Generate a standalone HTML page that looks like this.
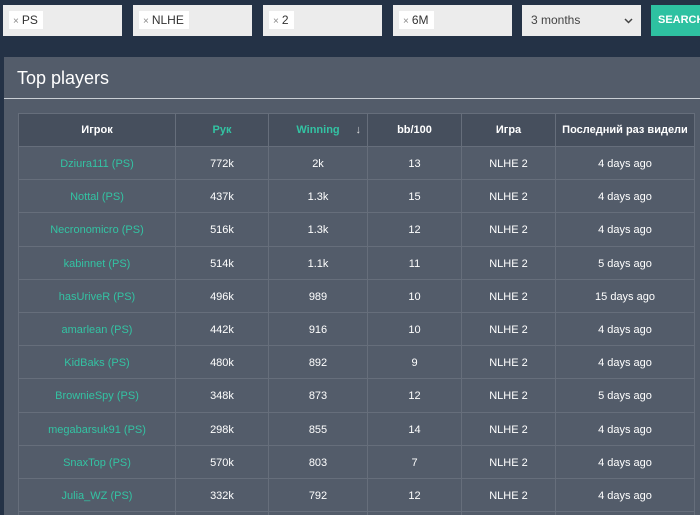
<!DOCTYPE html>
<html style="height:515px;overflow:hidden"><head><meta charset="utf-8"><style>
body{margin:0;width:700px;height:515px;overflow:hidden;background:#243246;font-family:"Liberation Sans",sans-serif;position:relative}
.in{position:absolute;top:5px;height:31px;width:119px;background:#ececec;}
.tag{position:absolute;left:6px;top:6px;height:18px;background:#fff;font-size:12px;line-height:18px;padding:0 5px 0 4px;color:#333}
.tag span{color:#888;font-size:10px;margin-right:3px}
.sel{position:absolute;top:5px;left:522px;width:119px;height:31px;background:#ececec;font-size:12px;line-height:31px;color:#444;}
.btn{position:absolute;top:5px;left:651px;width:60px;height:31px;background:#2ec1a1;color:#fff;font-weight:bold;font-size:11px;line-height:31px;padding-left:7px}
.panel{position:absolute;left:4px;top:57px;width:696px;height:458px;overflow:hidden;background:#535c6a}
.title{position:absolute;left:13px;top:11px;color:#fff;font-size:18px}
.line{position:absolute;left:0;top:41px;width:700px;height:1px;background:#c9ced4}
table{position:absolute;left:14px;top:56px;border-collapse:collapse;font-size:11px;color:#fff}
td,th{border:1px solid #666e7b;height:32px;text-align:center;padding:0}
td{padding-top:2px;height:30.2px}
th{background:#464f5d;font-weight:bold}
td:first-child{color:#33c3a3}
.g{color:#33c3a3}
</style></head><body>
<div class="in" style="left:3px"><div class="tag"><span>×</span>PS</div></div>
<div class="in" style="left:133px"><div class="tag"><span>×</span>NLHE</div></div>
<div class="in" style="left:263px"><div class="tag"><span>×</span>2</div></div>
<div class="in" style="left:393px"><div class="tag"><span>×</span>6M</div></div>
<div class="sel"><span style="margin-left:9px">3 months</span><svg style="position:absolute;left:102px;top:13px" width="9" height="6"><path d="M1 1L4.5 4.5L8 1" stroke="#444" stroke-width="1.5" fill="none"/></svg></div>
<div class="btn">SEARCH</div>
<div class="panel">
<div class="title">Top players</div><div class="line"></div>
<table>
<tr><th style="width:156px">Игрок</th><th class="g" style="width:92px">Рук</th><th class="g" style="width:98px;position:relative">Winning<span style="position:absolute;right:6px;color:#ddd;font-weight:normal">↓</span></th><th style="width:93px">bb/100</th><th style="width:93px">Игра</th><th style="width:138px">Последний раз видели</th></tr>
<tr><td>Dziura111 (PS)</td><td>772k</td><td>2k</td><td>13</td><td>NLHE 2</td><td>4 days ago</td></tr>
<tr><td>Nottal (PS)</td><td>437k</td><td>1.3k</td><td>15</td><td>NLHE 2</td><td>4 days ago</td></tr>
<tr><td>Necronomicro (PS)</td><td>516k</td><td>1.3k</td><td>12</td><td>NLHE 2</td><td>4 days ago</td></tr>
<tr><td>kabinnet (PS)</td><td>514k</td><td>1.1k</td><td>11</td><td>NLHE 2</td><td>5 days ago</td></tr>
<tr><td>hasUriveR (PS)</td><td>496k</td><td>989</td><td>10</td><td>NLHE 2</td><td>15 days ago</td></tr>
<tr><td>amarlean (PS)</td><td>442k</td><td>916</td><td>10</td><td>NLHE 2</td><td>4 days ago</td></tr>
<tr><td>KidBaks (PS)</td><td>480k</td><td>892</td><td>9</td><td>NLHE 2</td><td>4 days ago</td></tr>
<tr><td>BrownieSpy (PS)</td><td>348k</td><td>873</td><td>12</td><td>NLHE 2</td><td>5 days ago</td></tr>
<tr><td>megabarsuk91 (PS)</td><td>298k</td><td>855</td><td>14</td><td>NLHE 2</td><td>4 days ago</td></tr>
<tr><td>SnaxTop (PS)</td><td>570k</td><td>803</td><td>7</td><td>NLHE 2</td><td>4 days ago</td></tr>
<tr><td>Julia_WZ (PS)</td><td>332k</td><td>792</td><td>12</td><td>NLHE 2</td><td>4 days ago</td></tr>
<tr><td></td><td></td><td></td><td></td><td></td><td></td></tr>
</table>
</div>
</body></html>
